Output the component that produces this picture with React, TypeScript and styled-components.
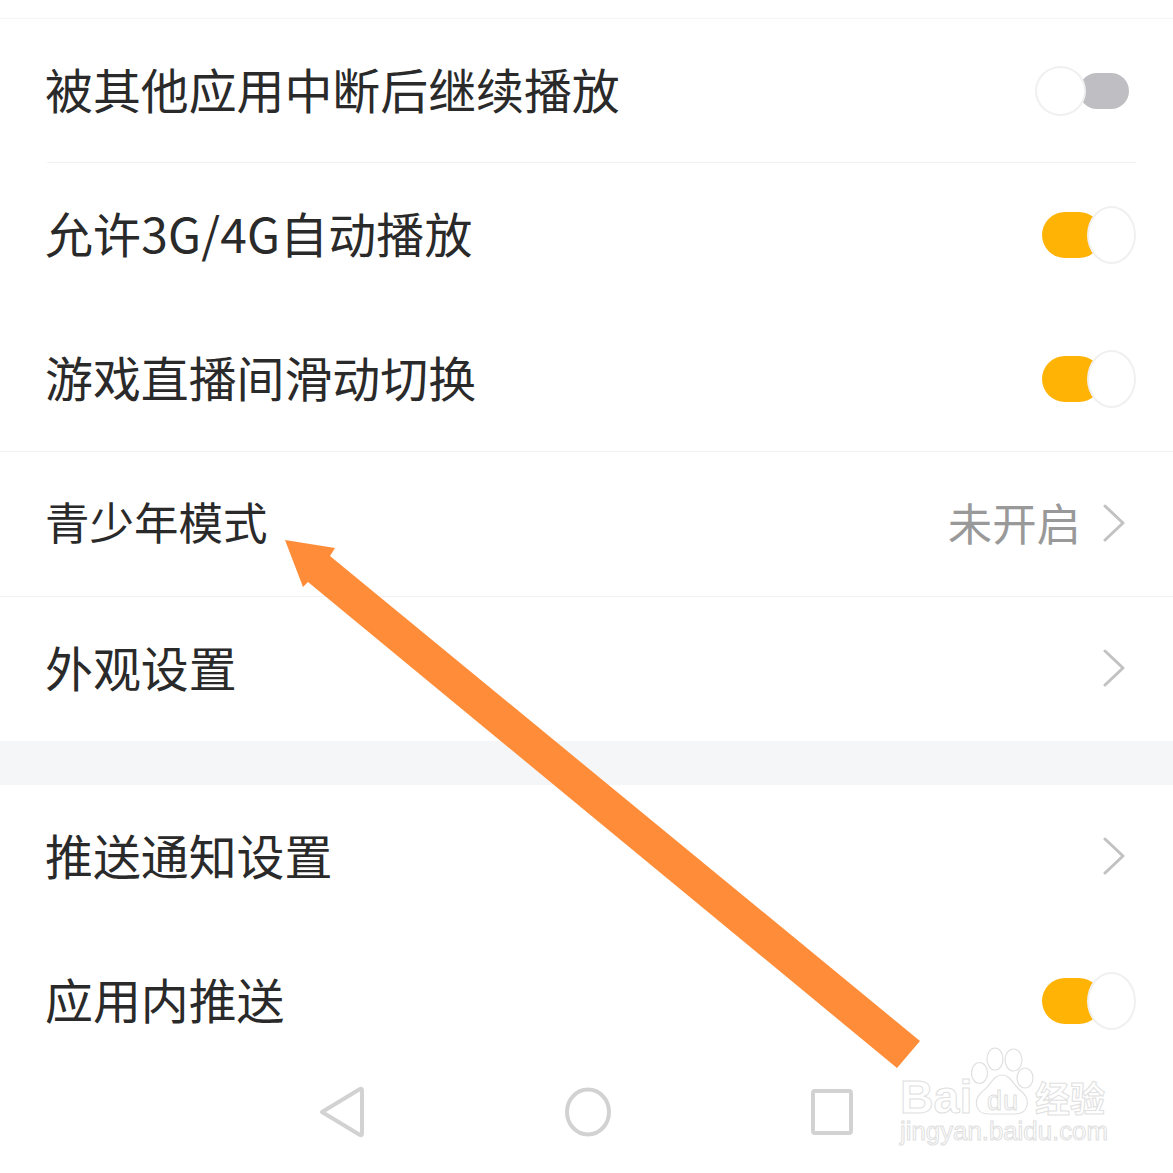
import React from "react";
import styled, { createGlobalStyle } from "styled-components";

const Global = createGlobalStyle`
  html, body { margin: 0; padding: 0; background: #fff; }
  * { box-sizing: border-box; }
`;

const Page = styled.div`
  position: relative;
  width: 1173px;
  height: 1173px;
  overflow: hidden;
  background: #fff;
  font-family: "Noto Sans CJK SC", "Noto Sans", sans-serif;
  color: #2a2a2a;
`;

const TopEdge = styled.div`
  height: 19px;
  border-bottom: 1px solid #f6f6f6;
`;

const Row = styled.div<{ $h?: number }>`
  height: ${(p) => p.$h ?? 144}px;
  padding: 0 37px 0 45px;
  display: flex;
  align-items: center;
  justify-content: space-between;
`;

const Label = styled.span<{ $size?: number; $spacing?: number }>`
  font-size: ${(p) => p.$size ?? 47.9}px;
  letter-spacing: ${(p) => p.$spacing ?? 0}px;
  line-height: 60px;
  font-weight: 400;
  margin-bottom: 6px;
`;

const Divider = styled.div<{ $inset?: boolean }>`
  height: 1px;
  background: #f1f1f1;
  margin: ${(p) => (p.$inset ? "0 37px 0 47px" : "0")};
`;

const GapBand = styled.div`
  height: 44px;
  background: #f5f6f8;
`;

const Switch = styled.div<{ $on: boolean }>`
  display: flex;
  align-items: center;
  flex-direction: ${(p) => (p.$on ? "row" : "row-reverse")};
  width: 94px;
  margin-right: ${(p) => (p.$on ? 0 : 7)}px;
`;

const Track = styled.div<{ $on: boolean }>`
  flex: none;
  width: ${(p) => (p.$on ? 60 : 50)}px;
  height: ${(p) => (p.$on ? 46 : 36)}px;
  border-radius: 23px;
  background: ${(p) => (p.$on ? "#ffb305" : "#bfbfc3")};
`;

const Knob = styled.div<{ $on: boolean }>`
  flex: none;
  width: ${(p) => (p.$on ? 49 : 51)}px;
  height: ${(p) => (p.$on ? 58 : 50)}px;
  margin-left: ${(p) => (p.$on ? -15 : 0)}px;
  margin-right: ${(p) => (p.$on ? 0 : -7)}px;
  border-radius: 50%;
  background: #fff;
  border: 2px solid #f0f0f0;
  z-index: 1;
`;

const Toggle = ({ on }: { on: boolean }) => (
  <Switch $on={on}>
    <Track $on={on} />
    <Knob $on={on} />
  </Switch>
);

const Trailing = styled.div`
  display: flex;
  align-items: center;
  gap: 21px;
  margin-right: 10px;
  margin-bottom: 3px;
`;

const Hint = styled.span`
  font-size: 44.4px;
  line-height: 56px;
  color: #999;
  margin-bottom: 1px;
`;

const ChevronSvg = styled.svg`
  display: block;
  width: 24px;
  height: 38px;
`;

const Chevron = () => (
  <ChevronSvg viewBox="0 0 24 38" fill="none">
    <path d="M3 2 L21 19 L3 36" stroke="#c2c2c2" strokeWidth="3" strokeLinecap="round" strokeLinejoin="round" />
  </ChevronSvg>
);

const NavBar = styled.div`
  height: 100px;
  padding: 13px 0 0 318px;
  display: flex;
  align-items: flex-start;
  gap: 198px;
`;

const NavIcon = styled.svg`
  display: block;
  flex: none;
  width: 48px;
  height: 52px;
  fill: none;
  stroke: #d2d2d2;
  stroke-width: 4;
  stroke-linejoin: round;
`;

const ArrowLayer = styled.svg`
  position: absolute;
  inset: 0;
  width: 1173px;
  height: 1173px;
  pointer-events: none;
`;

const Watermark = styled.div`
  position: absolute;
  left: 900px;
  top: 1047px;
  width: 215px;
  display: flex;
  flex-direction: column;
  pointer-events: none;
  color: #fff;
  font-family: "Liberation Sans", sans-serif;
  -webkit-text-stroke: 1px #e0e0e0;
`;

const MarkTop = styled.div`
  display: flex;
  align-items: flex-end;
  height: 68px;
`;

const BaiText = styled.span`
  width: 71px;
  font-size: 46.5px;
  line-height: 36px;
  font-weight: 700;
`;

const PawBox = styled.div`
  position: relative;
  width: 64px;
  height: 68px;
  flex: none;
  display: flex;
  align-items: flex-end;
  justify-content: center;
`;

const DuText = styled.span`
  position: relative;
  font-size: 27px;
  line-height: 28px;
  font-weight: 400;
  letter-spacing: 1px;
`;

const CnText = styled.span`
  font-family: "Noto Sans CJK SC", sans-serif;
  font-size: 35px;
  line-height: 36px;
  font-weight: 700;
`;

const UrlText = styled.span`
  margin-top: 1px;
  font-size: 25.8px;
  line-height: 30px;
  white-space: nowrap;
`;

const PawSvg = styled.svg`
  position: absolute;
  inset: 0;
  width: 64px;
  height: 68px;
  fill: #fff;
  stroke: #e0e0e0;
  stroke-width: 1.2;
`;

const App: React.FC = () => (
  <Page>
    <Global />
    <TopEdge />
    <Row $h={143}>
      <Label>被其他应用中断后继续播放</Label>
      <Toggle on={false} />
    </Row>
    <Divider $inset />
    <Row>
      <Label $spacing={0.2}>允许3G/4G自动播放</Label>
      <Toggle on />
    </Row>
    <Row>
      <Label>游戏直播间滑动切换</Label>
      <Toggle on />
    </Row>
    <Divider />
    <Row>
      <Label $size={44.5}>青少年模式</Label>
      <Trailing>
        <Hint>未开启</Hint>
        <Chevron />
      </Trailing>
    </Row>
    <Divider />
    <Row>
      <Label>外观设置</Label>
      <Trailing>
        <Chevron />
      </Trailing>
    </Row>
    <GapBand />
    <Row>
      <Label>推送通知设置</Label>
      <Trailing>
        <Chevron />
      </Trailing>
    </Row>
    <Row>
      <Label>应用内推送</Label>
      <Toggle on />
    </Row>
    <NavBar>
      <NavIcon viewBox="0 0 48 52">
        <path d="M4 26 L42 3 Q44 2 44 5 L44 47 Q44 50 42 49 Z" />
      </NavIcon>
      <NavIcon viewBox="0 0 48 52">
        <ellipse cx="24" cy="26" rx="21" ry="22.5" />
      </NavIcon>
      <NavIcon viewBox="0 0 48 52">
        <rect x="3" y="5" width="38" height="42" rx="2" />
      </NavIcon>
    </NavBar>
    <ArrowLayer viewBox="0 0 1173 1173">
      <polygon
        points="285,540 335,548 330,556 920,1041 897,1068 308,582 303,587"
        fill="#ff8c38"
      />
    </ArrowLayer>
    <Watermark>
      <MarkTop>
        <BaiText>Bai</BaiText>
        <PawBox>
          <PawSvg viewBox="0 0 64 68">
            <ellipse cx="8.5" cy="26" rx="8" ry="10.5" />
            <ellipse cx="24" cy="12" rx="8" ry="11" />
            <ellipse cx="42.5" cy="13" rx="8.5" ry="11" />
            <ellipse cx="54" cy="31" rx="8" ry="10" />
            <path d="M31 28 C22 28 20 38 12 44 C2 52 3 67 18 67 L44 67 C58 67 60 52 50 44 C42 38 40 28 31 28 Z" />
          </PawSvg>
          <DuText>du</DuText>
        </PawBox>
        <CnText>经验</CnText>
      </MarkTop>
      <UrlText>jingyan.baidu.com</UrlText>
    </Watermark>
  </Page>
);

export default App;
